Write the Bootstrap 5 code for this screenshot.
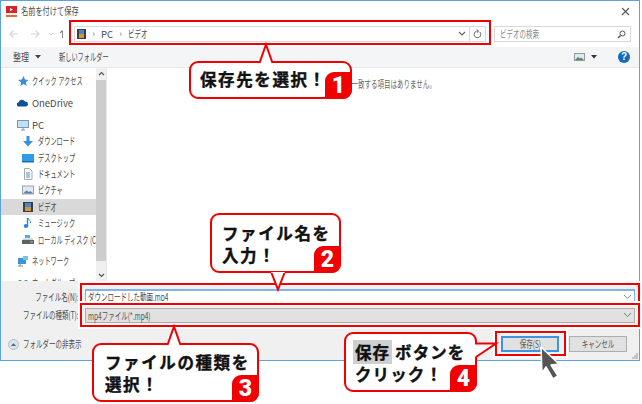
<!DOCTYPE html>
<html lang="ja">
<head>
<meta charset="utf-8">
<title>名前を付けて保存</title>
<link href="https://cdn.jsdelivr.net/npm/bootstrap@5.3.0/dist/css/bootstrap.min.css" rel="stylesheet">
<style>
html,body{margin:0;background:#fff}
body{width:642px;height:404px;position:relative;overflow:hidden;font-family:"Noto Sans CJK JP","Noto Sans",sans-serif;font-size:10px;line-height:16px;color:#4a4a4a}
.win{width:640px;height:361px;border:1px solid #58a3e0;background:#fff}
.nar{display:inline-block;white-space:nowrap;transform:scaleX(.65);transform-origin:left center}
.nar-r{transform-origin:right center;flex:none}
.nar-c{transform-origin:center}
.titlebar{height:21px;padding-left:5px}
.titlebar .nar{font-size:10px;transform:scaleX(.72);margin-left:4px}
.navrow{height:25px;padding-left:7px}
.addr{width:412px;height:16px;margin-left:4px;border:1px solid #d9d9d9;background:#fff;padding-left:2px}
.srch{width:137px;height:16px;margin-left:8px;border:1px solid #d9d9d9;padding:0 4px 0 5px;color:#8a8a8a}
.sep{width:1px;height:14px;background:#d9d9d9;margin:0 3px 0 3px}
.crumb{width:15px;text-align:center;color:#777;font-size:9px}
.toolbar{height:21px;background:#f4f5f7;padding:0 9px 0 12px;border-bottom:1px solid #e8e8e8}
.mainrow{height:214px;overflow:hidden}
.side{width:95px;padding-top:5px;overflow:hidden}
.side .nar{transform:scaleX(.62)}
.navitem{height:16.4px;line-height:16px;white-space:nowrap;overflow:hidden;padding-left:16px}
.navitem.sub{padding-left:21px}
.navitem.sec{margin-top:5.5px}
.navitem.sel{background:#d9d9d9}
.ico{width:12px;height:12px;flex:none;margin-right:3px}
.sub .ico{margin-right:4px}
.latin{font-size:9.5px}
.vscroll{width:11px;background:#f0f0f0;border-right:1px solid #e6e6e6;height:214px}
.arrow-box{height:12px}
.thumb{height:181px;background:#cdcdcd}
.track{flex:1}
.msg{padding:8px 0 0 212px;color:#666}
.panel{height:79px;background:#f0f0f0;padding-top:8px}
.lab{width:78px;flex:none;display:flex;justify-content:flex-end}
.fldwrap{width:550px;margin-left:6px}
.fname.form-control{height:16px;padding:0 2px;border-radius:0;border:1px solid #7eb4ea;border-top-width:2px;font-size:10px;line-height:13px;color:#444;background:#fff;font-family:inherit;box-shadow:none}
.ftype.form-select{height:15px;padding:0 2px;border-radius:0;border:1px solid #adadad;background:#e1e1e1;font-size:10px;line-height:13px;color:#555;font-family:inherit;box-shadow:none}
.chev{position:absolute;right:3px;top:50%;margin-top:-3px;width:9px;height:6px}
.rowtype{margin-top:2px}
.foot{margin-top:13px;padding:0 12px 0 7px}
.wbtn.btn{width:58px;height:16px;padding:0;border-radius:0;font-size:10px;line-height:12px;background:#e1e1e1;color:#555;border:1px solid #adadad}
.savebtn.btn{border:2px solid #3f94dc;margin-right:10px}
.grip{position:absolute;right:1px;bottom:1px;width:6px;height:6px}
.mark-box{position:absolute;border:2px solid #f00000;box-shadow:0 0 0 2px #fff,inset 0 0 0 1px #fff;pointer-events:none}
.mk1{left:69px;top:20px;width:422px;height:25px}
.mk2{left:80px;top:283px;width:560px;height:21px}
.mk3{left:80px;top:303px;width:560px;height:24px}
.mk4{left:495px;top:331px;width:71px;height:25px}
.co{position:absolute;background:#fff;border:2px solid #f00000;border-radius:9px;font-weight:700;font-size:16.5px;line-height:22px;color:#111;letter-spacing:1.6px;white-space:nowrap;-webkit-text-stroke:.4px #111}
.co1{left:189px;top:61px;width:163px;height:38px;padding:5px 0 0 9px}
.co2{left:210px;top:213px;width:131px;height:60px;padding:7px 0 0 10px}
.co3{left:92px;top:343px;width:167px;height:59px;padding:6px 0 0 11px}
.co4{left:344px;top:332px;width:133px;height:60px;padding:7px 0 0 9px;letter-spacing:1.1px;word-spacing:-2px}
.num{position:absolute;right:-2px;bottom:-2px;width:27px;height:27px;background:#f00000;color:#fff;border-radius:9px 0 9px 0;font-family:"Roboto",sans-serif;font-weight:900;font-size:23px;line-height:27px;text-align:center;letter-spacing:0;-webkit-text-stroke:0}
.tail{position:absolute;overflow:visible}
.t1{left:67px;top:-20px}
.t2{left:58px;top:57px}
.t3{left:72px;top:-20px}
.t4{left:129px;top:8px}
.hl{background:#cfcfcf;padding:0 2px 0 2px;margin-left:-2px}
.cursor{position:absolute;left:536px;top:342px}
.help{width:12px;height:12px;border-radius:50%;background:#0f6cbd;color:#fff;font:700 10px/12px "Liberation Sans",sans-serif;text-align:center}
</style>
</head>
<body>
<div class="win d-flex flex-column">
  <div class="titlebar d-flex align-items-center">
    <svg width="11" height="11" viewBox="0 0 11 11"><rect width="11" height="7" fill="#d8232a"/><rect y="7" width="11" height="2" fill="#f3f3f3"/><rect y="9" width="11" height="2" fill="#ee6a2a"/><path d="M4 2l3 1.6L4 5.2z" fill="#fff"/></svg>
    <span class="nar">名前を付けて保存</span>
    <svg class="ms-auto" style="margin-right:9px" width="9" height="9" viewBox="0 0 9 9"><path d="M1 1l7 7M8 1L1 8" stroke="#555" stroke-width="1.1"/></svg>
  </div>
  <div class="navrow d-flex align-items-center">
    <svg width="62" height="12" viewBox="0 0 62 12" fill="none"><path d="M2 6h8M5.500 2.500L2 6l3.500 3.500" stroke="#d4d4d4" stroke-width="1.100"/><path d="M23 6h8M27.500 2.500L31 6l-3.500 3.500" stroke="#d4d4d4" stroke-width="1.100"/><path d="M41 5l2 2 2-2" stroke="#d4d4d4"/><path d="M54.500 10V3M52 5l2.500-2.500" stroke="#8a8a8a" stroke-width="1.100"/></svg>
    <div class="addr d-flex align-items-center">
      <svg width="9" height="10" viewBox="0 0 9 10"><rect width="9" height="10" fill="#3a3f47"/><rect x="2" y="1" width="5" height="4" fill="#4f86c6"/><rect x="2" y="5" width="5" height="4" fill="#d09a3c"/></svg>
      <span class="crumb">›</span><span class="latin">PC</span><span class="crumb">›</span><span class="nar">ビデオ</span>
      <svg class="ms-auto" width="8" height="6" viewBox="0 0 8 6" fill="none"><path d="M1 1l3 3 3-3" stroke="#666" stroke-width="1.200"/></svg>
      <span class="sep"></span>
      <svg width="9" height="10" viewBox="0 0 9 10" fill="none" style="margin-right:3px"><path d="M6.800 3A3.300 3.300 0 1 1 3.500 2.200H5M4 .5L5.500 2.200 4 3.800" stroke="#666"/></svg>
    </div>
    <div class="srch d-flex align-items-center">
      <span class="nar">ビデオの検索</span>
      <svg class="ms-auto" width="9" height="9" viewBox="0 0 9 9" fill="none"><circle cx="5.500" cy="3.500" r="2.500" stroke="#555"/><path d="M3.500 5.500L1 8" stroke="#555" stroke-width="1.400"/></svg>
    </div>
  </div>
  <div class="toolbar d-flex align-items-center">
    <span class="nar" style="width:22px;transform:scaleX(.8)">整理</span>
    <svg width="6" height="4" viewBox="0 0 6 4"><path d="M0 0h6L3 3.500z" fill="#444"/></svg>
    <span class="nar" style="margin-left:18px;transform:scaleX(.62)">新しいフォルダー</span>
    <svg class="ms-auto" width="11" height="8" viewBox="0 0 11 8"><rect x=".5" y=".5" width="10" height="7" fill="#dfeaf3" stroke="#8f9aa5"/><path d="M1 7l3-3 2 1.500 1-1 3 2.500z" fill="#5d8a5a"/></svg>
    <svg style="margin:0 21px 0 6px" width="6" height="4" viewBox="0 0 6 4"><path d="M0 0h6L3 3.500z" fill="#333"/></svg>
    <div class="help">?</div>
  </div>
  <div class="mainrow d-flex">
    <nav class="side">
      <div class="navitem d-flex align-items-center"><svg class="ico" viewBox="0 0 12 12"><path d="M6.500 1l1.500 3.500 3.500.4-2.600 2.400.8 3.700-3.200-1.900-3.200 1.900.8-3.700L1 4.900l3.800-.4z" fill="#3d8fd8"/></svg><span class="nar">クイック アクセス</span></div>
      <div class="navitem sec d-flex align-items-center"><svg class="ico" viewBox="0 0 12 12"><path d="M1 9.500a2.300 2.300 0 0 1 .6-4.300A3.500 3.500 0 0 1 8 4.500a2.600 2.600 0 0 1 3 2.500c0 1.500-1 2.500-2.300 2.500z" fill="#0f4f9c"/></svg><span class="latin">OneDrive</span></div>
      <div class="navitem sec d-flex align-items-center"><svg class="ico" viewBox="0 0 12 12"><rect x=".5" y="1.500" width="11" height="7" fill="#bfe0f5" stroke="#7f95a8"/><path d="M4 11h4M6 9v2" stroke="#7f95a8"/></svg><span class="latin">PC</span></div>
      <div class="navitem sub d-flex align-items-center"><svg class="ico" viewBox="0 0 12 12"><path d="M4.500 1h3v5H11l-5 5.500L1 6h3.500z" fill="#3d8fd8"/></svg><span class="nar">ダウンロード</span></div>
      <div class="navitem sub d-flex align-items-center"><svg class="ico" viewBox="0 0 12 12"><rect y="2" width="12" height="8" fill="#2f9be6"/><rect y="9" width="12" height="1.500" fill="#1b6fb0"/></svg><span class="nar">デスクトップ</span></div>
      <div class="navitem sub d-flex align-items-center"><svg class="ico" viewBox="0 0 12 12"><path d="M2.500.5h5l2.500 2.500v8.500H2.500z" fill="#fbfbfb" stroke="#a8a8a8"/><path d="M4 5h4M4 7h4M4 9h4" stroke="#4a90c8"/></svg><span class="nar">ドキュメント</span></div>
      <div class="navitem sub d-flex align-items-center"><svg class="ico" viewBox="0 0 12 12"><rect x=".5" y="2" width="11" height="8" fill="#dfeaf3" stroke="#9aa4ad"/><path d="M1 9.500l3.500-3 2.500 1.500 1.500-1 2.500 2.500z" fill="#5f7f9c"/></svg><span class="nar">ピクチャ</span></div>
      <div class="navitem sub sel d-flex align-items-center"><svg class="ico" viewBox="0 0 12 12"><rect x="1" y="1" width="10" height="10" fill="#3a3f47"/><rect x="3" y="2" width="6" height="4" fill="#4f86c6"/><rect x="3" y="6" width="6" height="4" fill="#d09a3c"/></svg><span class="nar">ビデオ</span></div>
      <div class="navitem sub d-flex align-items-center"><svg class="ico" viewBox="0 0 12 12"><path d="M5.500 1v7.500" stroke="#2e86d8" stroke-width="1.400"/><ellipse cx="4" cy="9" rx="2.300" ry="2" fill="#2e86d8"/><path d="M6 1c.5 2 3 2.500 2.500 5" stroke="#2e86d8" fill="none"/></svg><span class="nar">ミュージック</span></div>
      <div class="navitem sub d-flex align-items-center"><svg class="ico" viewBox="0 0 12 12"><rect x="3" y="1" width="5" height="3" fill="#4fb0e6"/><rect y="6" width="12" height="4" fill="#5c6268"/><rect x="1" y="4.500" width="10" height="1.500" fill="#c7ccd0"/><rect x="8" y="7.500" width="3" height="1" fill="#8fd46a"/></svg><span class="nar">ローカル ディスク (C</span></div>
      <div class="navitem sec d-flex align-items-center"><svg class="ico" viewBox="0 0 12 12"><rect x="1" y="3" width="8" height="6" fill="#3d94d8"/><rect x="6" y="1" width="5" height="4" fill="#7cc0ea"/><path d="M3 9v2M1 11h5" stroke="#7f8a94"/></svg><span class="nar">ネットワーク</span></div>
      <div class="navitem sec d-flex align-items-center"><svg class="ico" viewBox="0 0 12 12"><circle cx="3" cy="5" r="2" fill="#3fa34d"/><circle cx="9" cy="5" r="2" fill="#2e86d8"/><rect x="1" y="7" width="10" height="5" fill="#3fa34d"/></svg><span class="nar">ホームグループ</span></div>
    </nav>
    <div class="vscroll d-flex flex-column">
      <div class="arrow-box d-flex align-items-center justify-content-center"><svg width="7" height="5" viewBox="0 0 7 5" fill="none"><path d="M1 4l2.500-2.500L6 4" stroke="#555" stroke-width="1.200"/></svg></div>
      <div class="thumb"></div>
      <div class="track"></div>
      <div class="arrow-box d-flex align-items-center justify-content-center"><svg width="7" height="5" viewBox="0 0 7 5" fill="none"><path d="M1 1l2.500 2.500L6 1" stroke="#555" stroke-width="1.200"/></svg></div>
    </div>
    <div class="flex-grow-1 msg"><span class="nar">検索条件に一致する項目はありません。</span></div>
  </div>
  <div class="panel position-relative">
    <div class="d-flex align-items-center">
      <label class="lab" for="fn"><span class="nar nar-r">ファイル名(N):</span></label>
      <div class="fldwrap position-relative">
        <input id="fn" class="form-control fname" type="text" value="">
        <span class="nar position-absolute top-0" style="left:3px">ダウンロードした動画.mp4</span>
        <svg class="chev" viewBox="0 0 9 6" fill="none"><path d="M1 1l3.500 3.500L8 1" stroke="#888"/></svg>
      </div>
    </div>
    <div class="d-flex align-items-center rowtype">
      <label class="lab" for="ft"><span class="nar nar-r">ファイルの種類(T):</span></label>
      <div class="fldwrap position-relative">
        <div id="ft" class="form-select ftype"><span class="nar" style="line-height:13px;vertical-align:top">mp4ファイル(*.mp4)</span></div>
        <svg class="chev" viewBox="0 0 9 6" fill="none"><path d="M1 1l3.500 3.500L8 1" stroke="#777"/></svg>
      </div>
    </div>
    <div class="foot d-flex align-items-center">
      <svg width="11" height="11" viewBox="0 0 11 11"><circle cx="5.500" cy="5.500" r="5" fill="#dde3ea" stroke="#b5bcc4"/><path d="M2.800 7l2.700-2.700L8.200 7z" fill="#3b6ea5"/></svg>
      <span class="nar" style="margin-left:4px">フォルダーの非表示</span>
      <button class="btn wbtn savebtn ms-auto" type="button"><span class="nar nar-c">保存(S)</span></button>
      <button class="btn wbtn" type="button"><span class="nar nar-c">キャンセル</span></button>
    </div>
    <svg class="grip" viewBox="0 0 6 6"><path d="M4 0h2v2H4zM2 2h2v2H2zM4 2h2v2H4zM0 4h2v2H0zM2 4h2v2H2zM4 4h2v2H4z" fill="#c4c4c4"/></svg>
  </div>
</div>

<div class="mark-box mk1"></div>
<div class="mark-box mk2"></div>
<div class="mark-box mk3"></div>
<div class="mark-box mk4"></div>

<div class="co co1">保存先を選択！<span class="num">1</span>
  <svg class="tail t1" width="16" height="22"><path d="M1 22L8 1l7 21z" fill="#fff"/><path d="M1.500 20L8 1.500 14.500 20" fill="none" stroke="#f00000" stroke-width="2"/></svg>
</div>
<div class="co co2">ファイル名を<br>入力！<span class="num">2</span>
  <svg class="tail t2" width="16" height="20"><path d="M1 0l7 18 7-18z" fill="#fff"/><path d="M1.500 1L8 17.500 14.500 1" fill="none" stroke="#f00000" stroke-width="2"/></svg>
</div>
<div class="co co3">ファイルの種類を<br>選択！<span class="num">3</span>
  <svg class="tail t3" width="16" height="22"><path d="M1 22L8 1l7 21z" fill="#fff"/><path d="M1.500 20L8 1.500 14.500 20" fill="none" stroke="#f00000" stroke-width="2"/></svg>
</div>
<div class="co co4"><span class="hl">保存</span> ボタンを<br>クリック！<span class="num">4</span>
  <svg class="tail t4" width="24" height="16"><path d="M0 1h22L0 15z" fill="#fff"/><path d="M0 1.500h21L1 15" fill="none" stroke="#f00000" stroke-width="2"/></svg>
</div>

<svg class="cursor" width="30" height="42" viewBox="0 0 30 42"><path d="M5 5l18 17-8 1 7 11-5 3-7-12-4 6z" fill="#555" stroke="#fff" stroke-width="1.500" stroke-linejoin="round"/></svg>

<script src="https://cdn.jsdelivr.net/npm/bootstrap@5.3.0/dist/js/bootstrap.bundle.min.js"></script>
</body>
</html>
